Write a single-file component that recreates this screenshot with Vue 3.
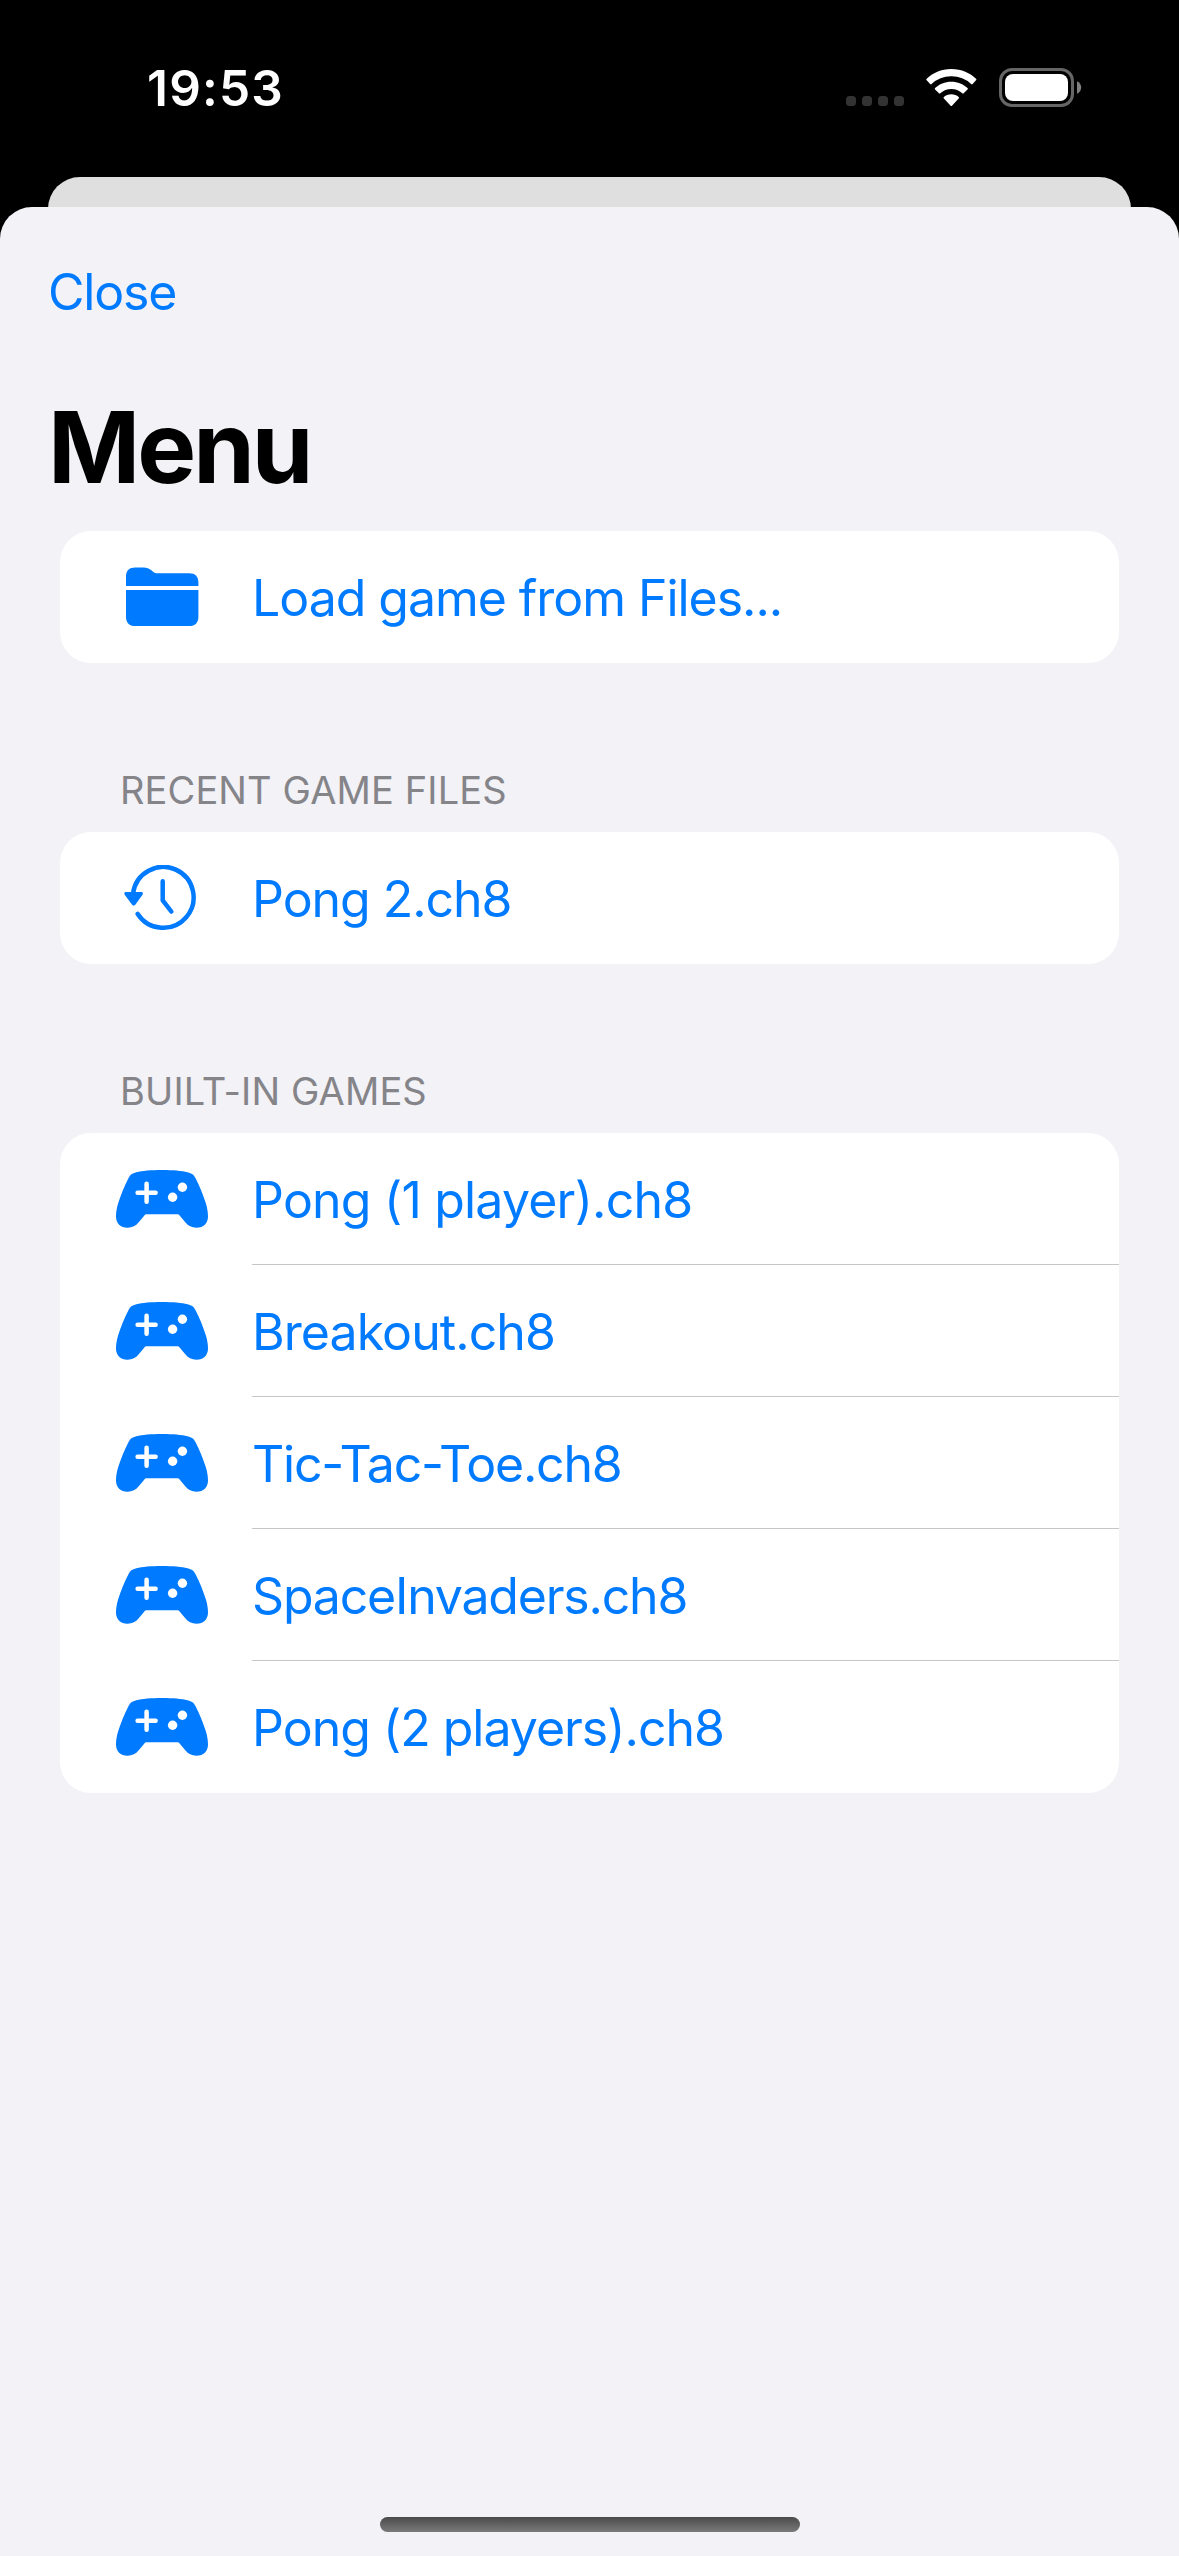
<script setup>
const games = [
  { name: 'Pong (1 player).ch8', tracking: -0.79 },
  { name: 'Breakout.ch8', tracking: -0.93 },
  { name: 'Tic-Tac-Toe.ch8', tracking: -1.22 },
  { name: 'SpaceInvaders.ch8', tracking: -1.2 },
  { name: 'Pong (2 players).ch8', tracking: -1 },
]
</script>

<template>
  <div class="screen">
    <header class="status">
      <span class="time">19:53</span>
      <div class="indicators">
        <div class="dots"><i v-for="n in 4" :key="n"></i></div>
        <svg class="wifi" width="51" height="38" viewBox="0 0 51 38">
          <path d="M25.3 0C35.500 0 44.200 4 50 9.800a1 1 0 0 1 0 1.500L46.600 15a1 1 0 0 1-1.500 0A28.500 28.500 0 0 0 25.300 7.300 28.500 28.500 0 0 0 5.600 15a1 1 0 0 1-1.500 0L.7 11.300a1 1 0 0 1 0-1.500C6.500 4 15.100 0 25.300 0Z" />
          <path d="M25.300 12.700c6.400 0 12.100 2.400 16.200 6.300a1 1 0 0 1 0 1.500L37.700 24.300a1 1 0 0 1-1.400 0A16.500 16.500 0 0 0 25.300 20a16.500 16.500 0 0 0-11 4.300 1 1 0 0 1-1.400 0L9.100 20.500a1 1 0 0 1 0-1.500c4.100-3.900 9.800-6.300 16.200-6.300Z" />
          <path d="M25.300 25.300c2.900 0 5.500 1 7.400 2.700a1 1 0 0 1 0 1.500L26.200 36.400a1.200 1.200 0 0 1-1.800 0L17.900 29.500a1 1 0 0 1 0-1.500c1.900-1.700 4.500-2.700 7.400-2.700Z" />
        </svg>
        <svg class="battery" width="83" height="39" viewBox="0 0 83 39">
          <rect x="1.500" y="1.500" width="72" height="36" rx="11.500" fill="none" stroke="#666" stroke-width="3" />
          <rect x="6" y="6" width="63" height="27" rx="8" fill="#fff" />
          <path d="M78 13.300c2.500 1 4.200 3.400 4.200 6.200s-1.700 5.200-4.200 6.200Z" fill="#808080" />
        </svg>
      </div>
    </header>

    <div class="backdrop"></div>

    <main class="sheet">
      <nav class="bar"><a class="close">Close</a></nav>
      <h1>Menu</h1>

      <section class="card">
        <div class="row">
          <span class="icon folder">
            <svg width="74" height="60" viewBox="0 0 74 60">
              <path d="M0 19V9.500C0 3.500 3.300.400 9.300.400h8.200c3.600 0 5.600.8 8.200 3.100l1 .9c1.600 1.400 2.700 1.800 5 1.800h31.300c6.200 0 9.400 3.200 9.400 9.300V19Z" />
              <path d="M0 22.900h72.400v26.800c0 6.100-3.200 9.300-9.300 9.300H9.300C3.300 59 0 55.800 0 49.700Z" />
            </svg>
          </span>
          <span class="label">Load game from Files...</span>
        </div>
      </section>

      <h2>RECENT GAME FILES</h2>
      <section class="card">
        <div class="row">
          <span class="icon history">
            <svg width="74" height="66" viewBox="0 0 74 66">
              <path class="line" d="M9.100 28A30.400 30.400 0 1 1 13.700 48.900" />
              <path class="line" d="M38.700 16.200V35.300L47.300 46.500" />
              <path d="M2.200 27H17.200c1.600 0 2.200 1.300 1.300 2.700L11.500 39.600c-1.100 1.400-2.500 1.400-3.600 0L.7 29.700C-.2 28.300.6 27 2.200 27Z" />
            </svg>
          </span>
          <span class="label">Pong 2.ch8</span>
        </div>
      </section>

      <h2>BUILT-IN GAMES</h2>
      <section class="card">
        <div v-for="game in games" :key="game.name" class="row">
          <span class="icon">
            <svg class="pad" width="92" height="58" viewBox="0 0 92 58">
              <path d="M46 0C57 0 66 .8 71.500 2.300 76 3.400 77.700 4.700 79.700 8.500 83.500 15.700 87 24.500 89.600 32.500 91.300 37.800 92 42.500 92 46.500 92 53.300 87.500 57.700 80.500 57.700 75.500 57.700 72.300 56 69.300 52.300L64 45.900C63 44.700 62.300 44.300 60.800 44.300H31.200C29.700 44.300 29 44.700 28 45.900L22.700 52.300C19.700 56 16.500 57.700 11.500 57.700 4.500 57.700 0 53.300 0 46.500 0 42.500.7 37.800 2.400 32.500 5 24.500 8.500 15.700 12.300 8.500 14.300 4.700 16 3.400 20.500 2.300 26 .8 35 0 46 0Z" />
              <path class="cross" d="M30.600 13.700V31.700M21.600 22.700H39.600" />
              <circle cx="56.600" cy="27.300" r="4.700" />
              <circle cx="66.400" cy="17.300" r="4.700" />
            </svg>
          </span>
          <span class="label" :style="{ letterSpacing: game.tracking + 'px' }">{{ game.name }}</span>
        </div>
      </section>

      <div class="home"></div>
    </main>
  </div>
</template>

<style>
body {
  margin: 0;
  background: #000;
}
</style>

<style scoped>
.screen {
  width: 1179px;
  height: 2556px;
  display: flex;
  flex-direction: column;
  background: #000;
  overflow: hidden;
  font-family: Inter, "Liberation Sans", sans-serif;
}
.status {
  height: 177px;
  display: flex;
  justify-content: space-between;
  box-sizing: border-box;
  padding: 68px 97px 0 147px;
}
.time {
  height: 40px;
  line-height: 40px;
  color: #fff;
  font-size: 49.500px;
  font-weight: 600;
  letter-spacing: 1.200px;
}
.indicators {
  display: flex;
  height: 39px;
}
.dots {
  display: flex;
  gap: 6px;
  padding-top: 28px;
}
.dots i {
  width: 10px;
  height: 10px;
  border-radius: 3.500px;
  background: #333;
}
.wifi {
  fill: #fff;
  margin: 1px 22px 0;
}
.backdrop {
  height: 60px;
  margin: 0 48px -30px;
  border-radius: 32px 32px 0 0;
  background: #dfdfdf;
  flex: none;
}
.sheet {
  position: relative;
  flex: 1;
  display: flex;
  flex-direction: column;
  background: #f2f2f7;
  border-radius: 32px 32px 0 0;
}
.bar {
  height: 168px;
  padding-left: 48px;
}
.close {
  display: block;
  line-height: 170px;
  font-size: 50px;
  letter-spacing: -1.200px;
  color: #007aff;
}
h1 {
  margin: 0;
  padding-left: 48px;
  height: 156px;
  line-height: 144px;
  font-size: 99px;
  font-weight: 700;
  letter-spacing: -3px;
  color: #000;
}
.card {
  margin: 0 60px;
  border-radius: 31px;
  background: #fff;
  color: #007aff;
  overflow: hidden;
}
h2 {
  margin: 0;
  height: 169px;
  padding-left: 120px;
  line-height: 254px;
  font-size: 38px;
  font-weight: 400;
  letter-spacing: 0.120px;
  color: #858489;
}
.row {
  display: flex;
  height: 132px;
}
.icon {
  width: 192px;
  display: flex;
  align-items: center;
  justify-content: center;
  box-sizing: border-box;
  padding-left: 12px;
  flex: none;
}
.icon.folder {
  padding-left: 14px;
}
.icon.history {
  padding-left: 9px;
}
.icon svg {
  fill: currentColor;
  flex: none;
}
.icon .line {
  fill: none;
  stroke: currentColor;
  stroke-width: 4.500;
  stroke-linecap: round;
  stroke-linejoin: round;
}
.pad .cross {
  stroke: #fff;
  stroke-width: 4.500;
  stroke-linecap: round;
}
.pad circle {
  fill: #fff;
}
.label {
  flex: 1;
  box-sizing: border-box;
  line-height: 134px;
  height: 132px;
  font-size: 50px;
  letter-spacing: -1.040px;
  white-space: nowrap;
}
.row:not(:last-child) .label {
  border-bottom: 1px solid #c6c6c8;
}
.home {
  width: 420px;
  height: 15px;
  margin: auto auto 24px;
  border-radius: 8px;
  background: linear-gradient(#4a4a4b, #7a7a7b);
}
</style>
